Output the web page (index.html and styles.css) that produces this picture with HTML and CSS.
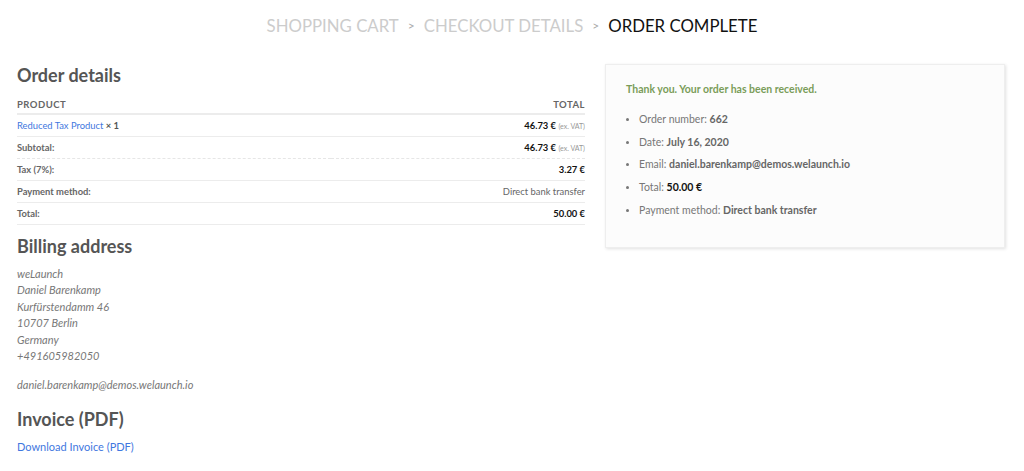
FILE: index.html
```html
<!DOCTYPE html>
<html lang="en">
<head>
<meta charset="UTF-8">
<meta name="viewport" content="width=device-width, initial-scale=1.0">
<title>Order complete</title>
<link rel="stylesheet" href="styles.css">
</head>
<body>
<nav class="steps">
  <span class="step">Shopping Cart</span>
  <span class="divider">&gt;</span>
  <span class="step">Checkout details</span>
  <span class="divider">&gt;</span>
  <span class="step current">Order Complete</span>
</nav>

<div class="page">
  <div class="left">
    <h2>Order details</h2>
    <table class="order-table">
      <thead>
        <tr><th>Product</th><th class="right">Total</th></tr>
      </thead>
      <tbody>
        <tr class="item">
          <td><a href="#">Reduced Tax Product</a> <strong>× 1</strong></td>
          <td class="right"><strong>46.73 €</strong> <small>(ex. VAT)</small></td>
        </tr>
      </tbody>
      <tfoot>
        <tr class="dotted"><th>Subtotal:</th><td class="right"><strong>46.73 €</strong> <small>(ex. VAT)</small></td></tr>
        <tr><th>Tax (7%):</th><td class="right"><strong>3.27 €</strong></td></tr>
        <tr><th>Payment method:</th><td class="right">Direct bank transfer</td></tr>
        <tr><th>Total:</th><td class="right"><strong>50.00 €</strong></td></tr>
      </tfoot>
    </table>

    <h2>Billing address</h2>
    <address>
      weLaunch<br>
      Daniel Barenkamp<br>
      Kurfürstendamm 46<br>
      10707 Berlin<br>
      Germany<br>
      +491605982050
      <span class="mail">daniel.barenkamp@demos.welaunch.io</span>
    </address>

    <h2>Invoice (PDF)</h2>
    <a href="#" class="invoice">Download Invoice (PDF)</a>
  </div>

  <div class="right-col">
    <div class="thanks-box">
      <p class="thanks">Thank you. Your order has been received.</p>
      <ul class="overview">
        <li>Order number: <strong>662</strong></li>
        <li>Date: <strong>July 16, 2020</strong></li>
        <li>Email: <strong>daniel.barenkamp@demos.welaunch.io</strong></li>
        <li>Total: <strong class="dark">50.00 €</strong></li>
        <li>Payment method: <strong>Direct bank transfer</strong></li>
      </ul>
    </div>
  </div>
</div>
</body>
</html>
```

FILE: styles.css
```css
body {
  margin: 0;
  padding: 0;
  background: #fff;
  font-family: 'Lato', 'Liberation Sans', sans-serif;
  color: #777;
}

.steps {
  display: flex;
  justify-content: center;
  align-items: center;
  gap: 9px;
  padding-top: 13px;
  height: 24px;
  font-size: 16.8px;
  text-transform: uppercase;
  color: #ccc;
}

.step.current {
  color: #111;
}

.divider {
  font-size: 12px;
  color: #aaa;
}

.page {
  display: flex;
  gap: 20px;
  padding: 0 17px;
  margin-top: 27px;
}

.left {
  width: 568px;
}

.right-col {
  width: 400px;
}

h2 {
  margin: 0;
  font-size: 18px;
  font-weight: 700;
  color: #555;
  line-height: 22px;
}

.order-table {
  width: 100%;
  border-collapse: collapse;
  font-size: 9.4px;
  margin-top: 9px;
  margin-bottom: 10px;
}

.order-table th,
.order-table td {
  text-align: left;
  padding: 0;
  height: 21px;
  border-bottom: 1px solid #ececec;
  color: #666;
}

.order-table thead th {
  text-transform: uppercase;
  letter-spacing: 0.05em;
  font-size: 9.5px;
  font-weight: 700;
  color: #666;
  border-bottom: 2px solid #ececec;
  height: 18px;
}

.order-table tfoot th {
  font-weight: 700;
}

.order-table .right {
  text-align: right;
}

.order-table td strong {
  color: #111;
}

.order-table .item td strong {
  color: #555;
}

.order-table .item td.right strong {
  color: #111;
}

.order-table tr.dotted th,
.order-table tr.dotted td {
  border-bottom: 1px dashed #e6e6e6;
}

.order-table small {
  font-size: 7px;
  color: #999;
}

a {
  color: #3f78e0;
  text-decoration: none;
}

address {
  font-size: 11px;
  line-height: 16.4px;
  margin: 9px 0 14px;
  color: #777;
}

address .mail {
  display: block;
  margin-top: 13px;
}

.invoice {
  display: block;
  font-size: 11px;
  margin-top: 10px;
}

.thanks-box {
  background: #fcfcfc;
  border: 1px solid #eee;
  box-shadow: 1px 1px 3px rgba(0, 0, 0, 0.12);
  padding: 18px 20px 14px 20px;
  height: 150px;
}

.thanks {
  margin: 0 0 13px;
  color: #7a9c59;
  font-weight: 700;
  font-size: 10.5px;
}

.overview {
  margin: 0;
  padding-left: 13px;
  font-size: 10.5px;
  color: #777;
}

.overview li {
  line-height: 22.7px;
}

.overview li::marker {
  font-size: 9px;
}

.overview strong {
  color: #666;
}

.overview strong.dark {
  color: #111;
}
```
